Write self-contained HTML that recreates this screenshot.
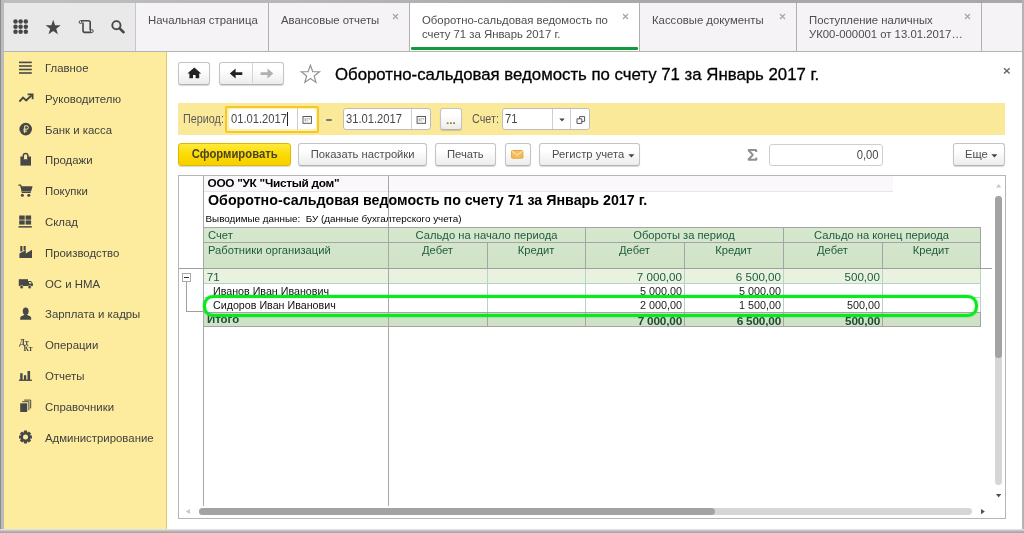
<!DOCTYPE html>
<html lang="ru">
<head>
<meta charset="utf-8">
<title>Оборотно-сальдовая ведомость по счету 71</title>
<style>
*{box-sizing:border-box;margin:0;padding:0}
html,body{width:1024px;height:533px;overflow:hidden;background:#fff}
body{font-family:"Liberation Sans",Arial,sans-serif;font-size:12px;color:#333;position:relative}
#root{position:absolute;left:0;top:0;width:1024px;height:533px;will-change:transform}
.abs{position:absolute}
/* window frame */
#frame-top{left:0;top:0;width:1024px;height:3px;background:linear-gradient(90deg,#bfbfbf 0,#b4b6b8 30%,#a9a9ad 60%,#a8a8a8 100%)}
#frame-left{left:0;top:0;width:4px;height:533px;background:#bbbbbb;border-left:1px solid #8c8c8c}
#frame-right{left:1022px;top:0;width:2px;height:533px;background:#b3b3b3}
#frame-bottom{left:0;top:529px;width:1024px;height:4px;background:linear-gradient(#ececec 0,#c6c6c6 40%,#a9a9a9 75%,#a6a6a6 100%)}
/* top bar */
#tools{left:4px;top:3px;width:131px;height:48px;background:#e9e9e9}
#tabs{left:135px;top:3px;width:887px;height:48px;background:#f5f3f5}
#topline{left:4px;top:51px;width:1018px;height:1px;background:#b3b3b3}
.tab{position:absolute;top:0;height:48px;border-left:1px solid #b0b0b0;font-size:11.35px;color:#4d4d4d;padding:10px 0 0 12px;line-height:14px;white-space:nowrap}
.tab .x{position:absolute;top:10px;right:10px}
.tab.active{background:#fff}
.tab.active:after{content:"";position:absolute;left:1px;right:1px;bottom:1px;height:3px;background:#0f9a3c;border-radius:1px}
/* sidebar */
#side{left:4px;top:52px;width:163px;height:478px;background:#fdec9e;border-right:1px solid #dccb66}
.mi{position:absolute;left:41px;font-size:11.4px;color:#404040;line-height:14px;white-space:nowrap}
/* main */
.btn{position:absolute;height:22.5px;border:1px solid #c4c4c4;border-bottom-color:#b2b2b2;border-radius:3px;background:linear-gradient(#ffffff 30%,#ececec);box-shadow:0 1px 1px rgba(0,0,0,.16);font-size:11.8px;color:#4d4d4d;line-height:20.5px;text-align:center;white-space:nowrap}
.inp{position:absolute;height:22px;border:1px solid #bdbdbd;border-radius:3px;background:#fff;font-size:12.1px;color:#484848;line-height:20px;white-space:nowrap}
.sx{display:inline-block;transform-origin:0 50%}
.btn .sx{transform-origin:50% 50%;transform:scaleX(.95)}
.inp .sx{transform:scaleX(.925)}
.lbl{position:absolute;font-size:12px;color:#5a5a5a;line-height:14px;white-space:nowrap;transform-origin:0 50%;transform:scaleX(.9)}
#band{left:178px;top:103px;width:827px;height:32px;background:#fbe99a}
#sheet{left:178px;top:175px;width:828px;height:344px;border:1px solid #b6b6b6;background:#fff;overflow:hidden}
.cell{position:absolute;white-space:nowrap;overflow:hidden}
.hl{position:absolute;height:1px;background:#a4a4a4}
.vl{position:absolute;width:1px;background:#a4a4a4}
.hd{color:#1f5b3d;font-size:11.2px;line-height:14px;text-align:center}
.num{text-align:right;font-size:10.8px;line-height:14px;color:#1a1a1a}
</style>
</head>
<body>
<div id="root">
<div id="tools" class="abs"></div>
<svg class="abs" style="left:0;top:0" width="140" height="52" viewBox="0 0 140 52">
<circle cx="15.5" cy="21.6" r="2.25" fill="#474747"/>
<circle cx="15.5" cy="26.7" r="2.25" fill="#474747"/>
<circle cx="15.5" cy="31.8" r="2.25" fill="#474747"/>
<circle cx="20.6" cy="21.6" r="2.25" fill="#474747"/>
<circle cx="20.6" cy="26.7" r="2.25" fill="#474747"/>
<circle cx="20.6" cy="31.8" r="2.25" fill="#474747"/>
<circle cx="25.8" cy="21.6" r="2.25" fill="#474747"/>
<circle cx="25.8" cy="26.7" r="2.25" fill="#474747"/>
<circle cx="25.8" cy="31.8" r="2.25" fill="#474747"/>
<polygon points="53.20,19.80 55.08,25.21 60.81,25.33 56.24,28.79 57.90,34.27 53.20,31.00 48.50,34.27 50.16,28.79 45.59,25.33 51.32,25.21" fill="#474747"/>
<path d="M81 20.7H88.4Q90.2 20.7 90.2 22.4V30.2M83 22.6V30.6Q83 32.4 84.8 32.4H91.3" fill="none" stroke="#474747" stroke-width="1.6"/>
<circle cx="80.5" cy="22.1" r="1.4" fill="#e9e9e9" stroke="#474747" stroke-width="1"/>
<circle cx="91.8" cy="31.1" r="1.4" fill="#e9e9e9" stroke="#474747" stroke-width="1"/>
<circle cx="116.4" cy="25.2" r="4.1" fill="none" stroke="#474747" stroke-width="1.9"/>
<path d="M119.6 28.4L123.6 32.2" stroke="#474747" stroke-width="2.6" stroke-linecap="round"/>
</svg>
<div id="tabs" class="abs">
  <div class="tab" style="left:0;width:133px;border-left-color:#c6c6c6">Начальная страница</div>
  <div class="tab" style="left:133px;width:141px">Авансовые отчеты<svg class="x" width="7" height="7" viewBox="0 0 7 7"><path d="M1 1L6 6M6 1L1 6" stroke="#a3a3a3" stroke-width="1.1"/></svg></div>
  <div class="tab active" style="left:274px;width:230px">Оборотно-сальдовая ведомость по<br>счету 71 за Январь 2017 г.<svg class="x" width="7" height="7" viewBox="0 0 7 7"><path d="M1 1L6 6M6 1L1 6" stroke="#a3a3a3" stroke-width="1.1"/></svg></div>
  <div class="tab" style="left:504px;width:157px">Кассовые документы<svg class="x" width="7" height="7" viewBox="0 0 7 7"><path d="M1 1L6 6M6 1L1 6" stroke="#a3a3a3" stroke-width="1.1"/></svg></div>
  <div class="tab" style="left:661px;width:185px">Поступление наличных<br>УК00-000001 от 13.01.2017…<svg class="x" width="7" height="7" viewBox="0 0 7 7"><path d="M1 1L6 6M6 1L1 6" stroke="#a3a3a3" stroke-width="1.1"/></svg></div>
  <div class="tab" style="left:846px;width:41px"></div>
</div>
<div id="topline" class="abs"></div>
<div id="side" class="abs">
  <div class="mi" style="top:8.9px">Главное</div>
  <div class="mi" style="top:39.7px">Руководителю</div>
  <div class="mi" style="top:70.5px">Банк и касса</div>
  <div class="mi" style="top:101.3px">Продажи</div>
  <div class="mi" style="top:132.1px">Покупки</div>
  <div class="mi" style="top:162.9px">Склад</div>
  <div class="mi" style="top:193.7px">Производство</div>
  <div class="mi" style="top:224.5px">ОС и НМА</div>
  <div class="mi" style="top:255.3px">Зарплата и кадры</div>
  <div class="mi" style="top:286.1px">Операции</div>
  <div class="mi" style="top:316.9px">Отчеты</div>
  <div class="mi" style="top:347.7px">Справочники</div>
  <div class="mi" style="top:378.5px">Администрирование</div>
</div>
<svg class="abs" style="left:0;top:52px" width="50" height="400" viewBox="0 52 50 400">
<rect x="19" y="61.6" width="12.8" height="1.6" fill="#474747"/>
<rect x="19" y="65.2" width="12.8" height="1.6" fill="#474747"/>
<rect x="19" y="68.7" width="12.8" height="1.6" fill="#474747"/>
<rect x="19" y="72.2" width="12.8" height="1.6" fill="#474747"/>
<path d="M19.4 101.6L23 97.6L26.2 100.5L31.6 95.2" fill="none" stroke="#474747" stroke-width="1.9"/>
<path d="M27.6 94.3H32.6V99.3" fill="none" stroke="#474747" stroke-width="1.8"/>
<circle cx="25.7" cy="129.1" r="6.3" fill="#474747"/>
<path d="M24.7 133V125.8H26.8Q28.4 125.8 28.4 127.5Q28.4 129.2 26.8 129.2H23.3M23.3 131.1H27" fill="none" stroke="#fdec9e" stroke-width="1"/>
<rect x="20.4" y="156.5" width="10.6" height="9.1" fill="#474747"/>
<path d="M23.3 159.2V155.8Q23.3 153.6 25.6 153.6Q27.9 153.6 27.9 155.8V159.2" fill="#fdec9e" stroke="#474747" stroke-width="1.5"/>
<path d="M18.4 185.2H20.6L21.4 187" fill="none" stroke="#474747" stroke-width="1.2"/>
<path d="M20.4 186.3H32.6L30.6 193H21.8Z" fill="#474747"/>
<rect x="22" y="191" width="8.8" height="1" fill="#8d8558"/>
<circle cx="22.4" cy="195.3" r="1.5" fill="#474747"/><circle cx="28.8" cy="195.3" r="1.5" fill="#474747"/>
<rect x="19.2" y="215.5" width="5.5" height="4.2" fill="#474747"/>
<rect x="25.6" y="215.5" width="5.5" height="4.2" fill="#474747"/>
<rect x="19.2" y="220.4" width="5.5" height="4.2" fill="#474747"/>
<rect x="25.6" y="220.4" width="5.5" height="4.2" fill="#474747"/>
<rect x="18.5" y="226.1" width="13.3" height="1.5" fill="#474747"/>
<rect x="20.3" y="246" width="2.1" height="5.5" fill="#474747"/><rect x="23.6" y="246" width="2.1" height="4.5" fill="#474747"/>
<path d="M19.4 258V253.6L25.8 250.2V253.6L32 249.8V258Z" fill="#474747"/>
<rect x="18.8" y="279.2" width="9.2" height="6.8" fill="#474747"/>
<path d="M28 281H31L32.9 283.4V286H28Z" fill="#474747"/>
<path d="M29 282H30.6L31.8 283.6H29Z" fill="#fdec9e"/>
<circle cx="21.6" cy="287" r="1.7" fill="#474747" stroke="#fdec9e" stroke-width=".5"/><circle cx="29.6" cy="287" r="1.7" fill="#474747" stroke="#fdec9e" stroke-width=".5"/>
<ellipse cx="25.7" cy="311.2" rx="2.9" ry="3.6" fill="#474747"/>
<path d="M20.2 319.8V318Q20.2 316 23 315.4L24.4 315H27L28.4 315.4Q31.2 316 31.2 318V319.8Z" fill="#474747"/>
<rect x="24.3" y="313.5" width="2.8" height="2.5" fill="#474747"/>
<text x="19.2" y="344.6" font-family="Liberation Serif,serif" font-weight="bold" font-size="8" fill="#474747">Дт</text>
<text x="23.6" y="350.6" font-family="Liberation Serif,serif" font-weight="bold" font-size="7.5" fill="#474747">Кт</text>
<rect x="20.2" y="373.2" width="2.4" height="7" fill="#474747"/><rect x="23.9" y="375.2" width="2.3" height="5" fill="#474747"/><rect x="27.5" y="371" width="2.6" height="9" fill="#474747"/>
<rect x="18.9" y="379.6" width="13" height="1.3" fill="#474747"/>
<rect x="20.2" y="403.3" width="7" height="8.7" fill="#474747"/>
<path d="M22.2 401.7H28.9V410.2M24.2 400.1H30.7V408.4" fill="none" stroke="#474747" stroke-width="1"/>
<polygon points="31.93,435.50 31.93,438.50 29.83,438.83 29.86,438.77 31.11,440.48 28.98,442.61 27.27,441.36 27.33,441.33 27.00,443.43 24.00,443.43 23.67,441.33 23.73,441.36 22.02,442.61 19.89,440.48 21.14,438.77 21.17,438.83 19.07,438.50 19.07,435.50 21.17,435.17 21.14,435.23 19.89,433.52 22.02,431.39 23.73,432.64 23.67,432.67 24.00,430.57 27.00,430.57 27.33,432.67 27.27,432.64 28.98,431.39 31.11,433.52 29.86,435.23 29.83,435.17" fill="#474747"/>
<circle cx="25.5" cy="437" r="2.5" fill="#fdec9e"/>
</svg>
<div class="btn" style="left:178px;top:62px;width:32px"></div>
<div class="btn" style="left:219px;top:62px;width:65px"></div>
<div class="abs" style="left:252px;top:63px;width:1px;height:20px;background:#d4d4d4"></div>
<svg class="abs" style="left:170px;top:56px" width="160" height="34" viewBox="170 56 160 34">
<path d="M194.3 67.4L201.2 73.4H199.2V78.2H195.6V75H193V78.2H189.4V73.4H187.4Z" fill="#222"/>
<path d="M229.8 73.6L235.6 68.6V72.3H242.3V74.9H235.6V78.6Z" fill="#222"/>
<path d="M273.3 73.6L267.5 68.6V72.3H260.6V74.9H267.5V78.6Z" fill="#b0b0b0"/>
<polygon points="310.40,65.20 312.69,71.54 319.44,71.76 314.11,75.91 315.98,82.39 310.40,78.60 304.82,82.39 306.69,75.91 301.36,71.76 308.11,71.54" fill="#fff" stroke="#939393" stroke-width="1.2"/>
</svg>
<div class="abs" id="ttl" style="left:335px;top:64.5px;font-size:16.8px;line-height:20px;color:#000;white-space:nowrap;-webkit-text-stroke:.3px #000">Оборотно-сальдовая ведомость по счету 71 за Январь 2017 г.</div>
<svg class="abs" style="left:1003px;top:67px" width="8" height="8" viewBox="0 0 8 8"><path d="M1 1.2L6.6 6.4M6.6 1.2L1 6.4" stroke="#666" stroke-width="1.4"/></svg>
<div id="band" class="abs"></div>
<div class="lbl" style="left:183px;top:112px">Период:</div>
<div class="abs" style="left:225px;top:106px;width:94px;height:26.5px;border:2px solid #f8c822;border-radius:2px;background:#fdf0b6"></div>
<div class="abs" style="left:228.5px;top:109.3px;width:87px;height:19.8px;border-radius:3px;background:#fff"></div>
<div class="inp" style="left:227px;top:108px;width:60px;border-color:transparent;background:none;padding-left:2.6px"><span class="sx">01.01.2017</span></div>
<div class="abs" style="left:287px;top:112px;width:1px;height:14px;background:#222"></div>
<div class="abs" style="left:297px;top:108px;width:1px;height:22px;background:#cfcfcf"></div>
<div class="abs" style="left:325.7px;top:118.8px;width:6.3px;height:2px;background:#777;border-radius:1px"></div>
<div class="inp" style="left:343px;top:108px;width:88px;padding-left:2.2px"><span class="sx">31.01.2017</span></div>
<div class="abs" style="left:411px;top:109px;width:1px;height:20px;background:#cfcfcf"></div>
<div class="btn" style="left:439.8px;top:107.7px;width:22px;color:#9a7a1c;font-weight:bold;line-height:22px">...</div>
<div class="lbl" style="left:472px;top:112px">Счет:</div>
<div class="inp" style="left:502px;top:108px;width:88px;padding-left:2.4px"><span class="sx">71</span></div>
<div class="abs" style="left:552px;top:109px;width:1px;height:20px;background:#cfcfcf"></div>
<div class="abs" style="left:570px;top:109px;width:1px;height:20px;background:#cfcfcf"></div>
<svg class="abs" style="left:295px;top:105px" width="300" height="30" viewBox="295 105 300 30">
<rect x="303.0" y="116.5" width="8.4" height="6.8" fill="#fff" stroke="#5a5a5a" stroke-width="1"/><rect x="304.5" y="118.2" width="2" height="3.2" fill="#b5b5b5"/><rect x="307.1" y="118.2" width="1.2" height="1.2" fill="#999"/><rect x="308.8" y="118.2" width="1.2" height="1.2" fill="#999"/><rect x="307.1" y="120.2" width="1.2" height="1.2" fill="#bbb"/>
<rect x="417.1" y="116.5" width="8.4" height="6.8" fill="#fff" stroke="#5a5a5a" stroke-width="1"/><rect x="418.6" y="118.2" width="2" height="3.2" fill="#b5b5b5"/><rect x="421.20000000000005" y="118.2" width="1.2" height="1.2" fill="#999"/><rect x="422.90000000000003" y="118.2" width="1.2" height="1.2" fill="#999"/><rect x="421.20000000000005" y="120.2" width="1.2" height="1.2" fill="#bbb"/>
<path d="M559.3 118.6H564.7L562 121.6Z" fill="#444"/>
<path d="M579.6 116.6H584.6V121.4H579.6Z" fill="#fff" stroke="#555" stroke-width="1"/>
<path d="M577 118.8H581.8V123.4H577Z" fill="#fff" stroke="#555" stroke-width="1"/>
</svg>
<div class="btn" style="left:178px;top:143.3px;height:22.7px;width:113px;background:linear-gradient(#ffea3c,#fcd900 55%,#f6cf00);border-color:#dcba00;font-weight:bold;color:#4b4526;font-size:12px"><span class="sx" style="transform:scaleX(.94)">Сформировать</span></div>
<div class="btn" style="left:298px;top:143.3px;height:22.7px;width:129px"><span class="sx">Показать настройки</span></div>
<div class="btn" style="left:435px;top:143.3px;height:22.7px;width:61px"><span class="sx">Печать</span></div>
<div class="btn" style="left:505px;top:143.3px;height:22.7px;width:26px"></div>
<svg class="abs" style="left:511.4px;top:150.3px" width="13" height="9.3" viewBox="0 0 14 10"><rect x=".6" y=".6" width="12.2" height="8.2" rx="1" fill="#f3c165" stroke="#e3a02c" stroke-width="1"/><path d="M1 1.2L6.7 5.6L12.4 1.2" fill="none" stroke="#fbe3b0" stroke-width="1.1"/><path d="M1 8.4L5 4.6M12.4 8.4L8.4 4.6" fill="none" stroke="#e9ae45" stroke-width=".8"/></svg>
<div class="btn" style="left:539px;top:143.3px;height:22.7px;width:101px;text-align:left;padding-left:12px"><span class="sx" style="transform-origin:0 50%">Регистр учета</span></div>
<svg class="abs" style="left:628px;top:154px" width="7" height="4"><path d="M0.4 0.3H6.4L3.4 3.6Z" fill="#444"/></svg>
<svg class="abs" style="left:746px;top:148px" width="13" height="14" viewBox="746 148 13 14"><path d="M756.2 152V150H748.3L752.9 154.9L748.2 159.8H756.3V157.6" fill="none" stroke="#8f8f8f" stroke-width="2" stroke-linejoin="bevel"/></svg>
<div class="inp" style="left:769px;top:144px;width:114px;text-align:right;padding-right:3px;border-color:#cfcfcf"><span class="sx" style="transform-origin:100% 50%">0,00</span></div>
<div class="btn" style="left:953px;top:143.3px;height:22.7px;width:52px;text-align:left;padding-left:11px"><span class="sx" style="transform-origin:0 50%">Еще</span></div>
<svg class="abs" style="left:991px;top:154px" width="7" height="4"><path d="M0.4 0.3H6.4L3.4 3.6Z" fill="#444"/></svg>
<div id="sheet" class="abs">
<div class="cell" style="left:25px;top:0px;width:689px;height:16px;background:#fbf8fb;border-bottom:1px solid #e8e5e8"></div>
<div class="cell" style="left:28.5px;top:-0.5px;font-size:11.8px;letter-spacing:-.27px;font-weight:bold;color:#000;line-height:14px">ООО "УК "Чистый дом"</div>
<div class="cell" style="left:29px;top:15px;font-size:14.25px;font-weight:bold;color:#000;line-height:18px">Оборотно-сальдовая ведомость по счету 71 за Январь 2017 г.</div>
<div class="cell" style="left:26.5px;top:36.5px;font-size:9.85px;color:#000;line-height:12px;white-space:pre">Выводимые данные:  БУ (данные бухгалтерского учета)</div>
<div class="cell" style="left:25px;top:51px;width:776px;height:41px;background:linear-gradient(#d6e8ce,#cfe3c7)"></div>
<div class="cell" style="left:25px;top:93px;width:776px;height:14px;background:#e8f2df"></div>
<div class="cell" style="left:25px;top:136px;width:776px;height:14px;background:#cfe2c7"></div>
<div class="hl" style="left:25px;top:51px;width:777px;background:#a4a4a4"></div>
<div class="hl" style="left:25px;top:66px;width:777px;background:#a4a4a4"></div>
<div class="hl" style="left:25px;top:107px;width:777px;background:#b7d2c6"></div>
<div class="hl" style="left:25px;top:121px;width:777px;background:#b7d2c6"></div>
<div class="hl" style="left:25px;top:136px;width:777px;background:#a4a4a4"></div>
<div class="hl" style="left:25px;top:150px;width:777px;background:#a4a4a4"></div>
<div class="vl" style="left:308px;top:66px;height:85px"></div>
<div class="vl" style="left:308px;top:93px;height:43px;background:#b7d2c6"></div>
<div class="vl" style="left:406px;top:51px;height:100px"></div>
<div class="vl" style="left:406px;top:93px;height:43px;background:#b7d2c6"></div>
<div class="vl" style="left:505px;top:66px;height:85px"></div>
<div class="vl" style="left:505px;top:93px;height:43px;background:#b7d2c6"></div>
<div class="vl" style="left:604px;top:51px;height:100px"></div>
<div class="vl" style="left:604px;top:93px;height:43px;background:#b7d2c6"></div>
<div class="vl" style="left:703px;top:66px;height:85px"></div>
<div class="vl" style="left:703px;top:93px;height:43px;background:#b7d2c6"></div>
<div class="vl" style="left:801px;top:51px;height:100px"></div>
<div class="vl" style="left:801px;top:93px;height:43px;background:#b7d2c6"></div>
<div class="vl" style="left:24px;top:0;height:330px;background:#a8a8a8"></div>
<div class="vl" style="left:209px;top:0;height:330px;background:#a8a8a8"></div>
<div class="hl" style="left:0;top:92px;width:813px;background:#a0a0a0"></div>
<div class="cell hd" style="left:29px;top:52px;text-align:left">Счет</div>
<div class="cell hd" style="left:29px;top:67px;text-align:left">Работники организаций</div>
<div class="cell hd" style="left:209px;top:52px;width:197px">Сальдо на начало периода</div>
<div class="cell hd" style="left:406px;top:52px;width:198px">Обороты за период</div>
<div class="cell hd" style="left:604px;top:52px;width:197px">Сальдо на конец периода</div>
<div class="cell hd" style="left:209px;top:67px;width:99px">Дебет</div>
<div class="cell hd" style="left:308px;top:67px;width:98px">Кредит</div>
<div class="cell hd" style="left:406px;top:67px;width:99px">Дебет</div>
<div class="cell hd" style="left:505px;top:67px;width:99px">Кредит</div>
<div class="cell hd" style="left:604px;top:67px;width:99px">Дебет</div>
<div class="cell hd" style="left:703px;top:67px;width:98px">Кредит</div>
<div class="cell" style="left:27.7px;top:93.8px;font-size:11.6px;line-height:14px;color:#1f5b3d">71</div>
<div class="cell" style="left:34px;top:108px;font-size:10.7px;line-height:14px;color:#111">Иванов Иван Иванович</div>
<div class="cell" style="left:34px;top:121.5px;font-size:10.7px;line-height:14px;color:#111">Сидоров Иван Иванович</div>
<div class="cell" style="left:28px;top:136px;font-size:11.4px;line-height:14px;font-weight:bold;color:#1d4a32">Итого</div>
<div class="cell num" style="left:406px;top:93.6px;width:97px;font-size:11.6px;color:#1f5b3d">7 000,00</div>
<div class="cell num" style="left:505px;top:93.6px;width:97px;font-size:11.6px;color:#1f5b3d">6 500,00</div>
<div class="cell num" style="left:604px;top:93.6px;width:97px;font-size:11.6px;color:#1f5b3d">500,00</div>
<div class="cell num" style="left:406px;top:108px;width:97px;">5 000,00</div>
<div class="cell num" style="left:505px;top:108px;width:97px;">5 000,00</div>
<div class="cell num" style="left:406px;top:122px;width:97px;">2 000,00</div>
<div class="cell num" style="left:505px;top:122px;width:97px;">1 500,00</div>
<div class="cell num" style="left:604px;top:122px;width:97px;">500,00</div>
<div class="cell num" style="left:406px;top:137.8px;width:97px;font-size:11.8px;letter-spacing:-.2px;font-weight:bold;color:#1d4a32">7 000,00</div>
<div class="cell num" style="left:505px;top:137.8px;width:97px;font-size:11.8px;letter-spacing:-.2px;font-weight:bold;color:#1d4a32">6 500,00</div>
<div class="cell num" style="left:604px;top:137.8px;width:97px;font-size:11.8px;letter-spacing:-.2px;font-weight:bold;color:#1d4a32">500,00</div>
<div class="cell" style="left:2.5px;top:96.5px;width:9px;height:9px;border:1px solid #a8a8a8;background:#fff"></div>
<div class="cell" style="left:4.5px;top:100.5px;width:5px;height:1px;background:#333"></div>
<div class="cell" style="left:7px;top:106px;width:1px;height:29px;background:#a0a0a0"></div>
<div class="cell" style="left:7px;top:135px;width:17px;height:1px;background:#a0a0a0"></div>
<div class="cell" style="left:24.4px;top:118.9px;width:774.2px;height:22px;border:3px solid #0ae820;border-radius:10px;box-shadow:0 0 1.5px #0ae820,inset 0 0 1px #0ae820;overflow:visible"></div>
<div class="cell" style="left:816px;top:20px;width:7px;height:289px;border-radius:4px;background:#d6d6d6"></div>
<div class="cell" style="left:816px;top:20px;width:7px;height:162px;border-radius:4px;background:#a3a3a3"></div>
<div class="cell" style="left:20px;top:332.3px;width:773px;height:7px;border-radius:4px;background:#d6d6d6"></div>
<div class="cell" style="left:20px;top:332.3px;width:516px;height:7px;border-radius:4px;background:#a3a3a3"></div>
<svg class="abs" style="left:816.9px;top:8px" width="5.2" height="3.6" viewBox="0 0 5.2 3.6"><path d="M0 3.6L2.6 0L5.2 3.6Z" fill="#c6c6c6"/></svg>
<svg class="abs" style="left:816.9px;top:318.2px" width="5.2" height="3.6" viewBox="0 0 5.2 3.6"><path d="M0 0L2.6 3.6L5.2 0Z" fill="#505050"/></svg>
<svg class="abs" style="left:7.3px;top:333.3px" width="3.9" height="5.2" viewBox="0 0 3.9 5.2"><path d="M3.9 0L0 2.6L3.9 5.2Z" fill="#c6c6c6"/></svg>
<svg class="abs" style="left:801.9px;top:333.3px" width="3.9" height="5.2" viewBox="0 0 3.9 5.2"><path d="M0 0L3.9 2.6L0 5.2Z" fill="#505050"/></svg>
</div>
<div id="frame-top" class="abs"></div>
<div id="frame-left" class="abs"></div>
<div id="frame-right" class="abs"></div>
<div id="frame-bottom" class="abs"></div>
</div>
</body>
</html>
